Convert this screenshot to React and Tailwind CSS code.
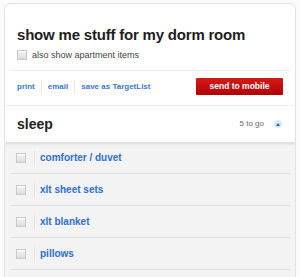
import React from "react";

const font = { fontFamily: '"Liberation Sans", Arial, sans-serif' };

function Box() {
  return (
    <span className="block w-[10px] h-[10px] shrink-0 border border-[#c9c9c9] bg-gradient-to-b from-[#f4f4f4] to-[#dcdcdc] shadow-[inset_0_1px_0_#fff]" />
  );
}

const items = ["comforter / duvet", "xlt sheet sets", "xlt blanket", "pillows"];

export default function App() {
  return (
    <div className="w-[300px] h-[277px] bg-[#fbfbfb] overflow-hidden pt-[3px] pl-[4px]" style={font}>
      <div className="w-[292px] h-[290px] border border-[#e2e2e2] rounded-[6px] bg-white overflow-hidden flex flex-col">
        <div className="pt-[22px] px-[12px]">
          <h1 className="text-[15px] leading-[18px] font-bold text-[#1e1e1e] tracking-[-0.2px]">
            show me stuff for my dorm room
          </h1>
          <label className="mt-[5px] flex items-center gap-[5px] text-[9px] leading-[12px] text-[#444]">
            <Box />
            <span>also show apartment items</span>
          </label>
        </div>
        <div className="mt-[9px] mx-[5px] h-px bg-[#ececec]" />
        <div className="pt-[7px] pb-[10px] pl-[12px] pr-[12px] flex items-center justify-between">
          <div className="flex items-center text-[8px] leading-[14px] font-bold text-[#3b78c9]">
            <span>print</span>
            <span className="mx-[6px] w-px h-[14px] bg-[#e6e6e6]" />
            <span>email</span>
            <span className="mx-[6px] w-px h-[14px] bg-[#e6e6e6]" />
            <span>save as TargetList</span>
          </div>
          <button className="w-[87px] h-[17px] rounded-[1px] bg-gradient-to-b from-[#d41a1a] to-[#b30000] text-white text-[8.5px] font-bold leading-[17px] text-center">
            send to mobile
          </button>
        </div>
        <div className="relative z-10 h-[37px] shrink-0 border-t border-[#ebebeb] bg-white shadow-[0_2px_3px_rgba(0,0,0,0.1)] flex items-center pl-[12px] pr-[13px]">
          <span className="text-[14px] leading-[18px] font-bold text-[#1e1e1e]">sleep</span>
          <span className="ml-auto text-[8px] text-[#666]">5 to go</span>
          <span className="ml-[10px] w-[8px] h-[8px] rounded-full bg-[#d9e8fa] flex items-center justify-center">
            <svg width="4" height="3" viewBox="0 0 4 3">
              <path d="M2 0 L4 3 L0 3 Z" fill="#2f5fa8" />
            </svg>
          </span>
        </div>
        <div className="flex-1 bg-[#f3f3f3]">
          {items.map((t) => (
            <div key={t} className="mx-[5px] h-[32px] border-b border-[#e1e1e1] flex items-center">
              <span className="ml-[6px]">
                <Box />
              </span>
              <span className="ml-[8px] w-px h-[14px] bg-[#e2e2e2]" />
              <span className="ml-[5px] text-[10px] font-bold text-[#2f6fd0] leading-[14px]">{t}</span>
            </div>
          ))}
        </div>
      </div>
    </div>
  );
}
